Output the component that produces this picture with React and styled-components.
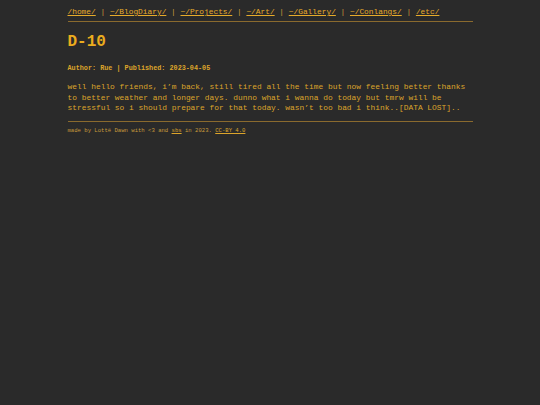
import React from 'react';
import styled, { createGlobalStyle } from 'styled-components';

const GlobalStyle = createGlobalStyle`
  html, body {
    margin: 0;
    padding: 0;
    background: #2a2a2a;
  }
  body {
    font-family: "Liberation Mono", "DejaVu Sans Mono", monospace;
    color: #dca42a;
  }
`;

const Page = styled.div`
  width: 75%;
  margin: 0 auto;
  padding-top: 7px;
`;

const Nav = styled.nav`
  font-size: 7.85px;
  line-height: 10px;
  color: #dca42a;
  padding-bottom: 4px;
  border-bottom: 1px solid #8a6a2e;
`;

const NavLink = styled.a`
  color: #e6ab2a;
  text-decoration: underline;
`;

const Sep = styled.span`
  color: #c89a3a;
`;

const Title = styled.h1`
  margin: 11px 0 0;
  font-size: 16px;
  line-height: 18px;
  font-weight: bold;
  color: #eaac1e;
`;

const Meta = styled.div`
  margin-top: 13px;
  font-size: 6.8px;
  line-height: 8px;
  font-weight: bold;
  color: #dca42a;
`;

const Body = styled.p`
  margin: 10px 0 0;
  font-size: 7.9px;
  line-height: 10.5px;
  color: #dca42a;
  padding-bottom: 7px;
  border-bottom: 1px solid #8a6a2e;
`;

const Footer = styled.footer`
  margin-top: 5px;
  font-size: 5.6px;
  line-height: 8px;
  color: #c89a3a;
`;

const FootLink = styled.a`
  color: #dca42a;
  text-decoration: underline;
`;

const links = ['/home/', '~/BlogDiary/', '~/Projects/', '~/Art/', '~/Gallery/', '~/Conlangs/', '/etc/'];

export default function App() {
  return (
    <>
      <GlobalStyle />
      <Page>
        <Nav>
          {links.map((l, i) => (
            <React.Fragment key={l}>
              {i > 0 && <Sep> | </Sep>}
              <NavLink href="#">{l}</NavLink>
            </React.Fragment>
          ))}
        </Nav>
        <Title>D-10</Title>
        <Meta>Author: Rue | Published: 2023-04-05</Meta>
        <Body>
          well hello friends, i’m back, still tired all the time but now feeling better thanks
          to better weather and longer days. dunno what i wanna do today but tmrw will be
          stressful so i should prepare for that today. wasn’t too bad i think..[DATA LOST]..
        </Body>
        <Footer>
          made by Lottë Dawn with &lt;3 and <FootLink href="#">sbs</FootLink> in 2023. <FootLink href="#">CC-BY 4.0</FootLink>
        </Footer>
      </Page>
    </>
  );
}
